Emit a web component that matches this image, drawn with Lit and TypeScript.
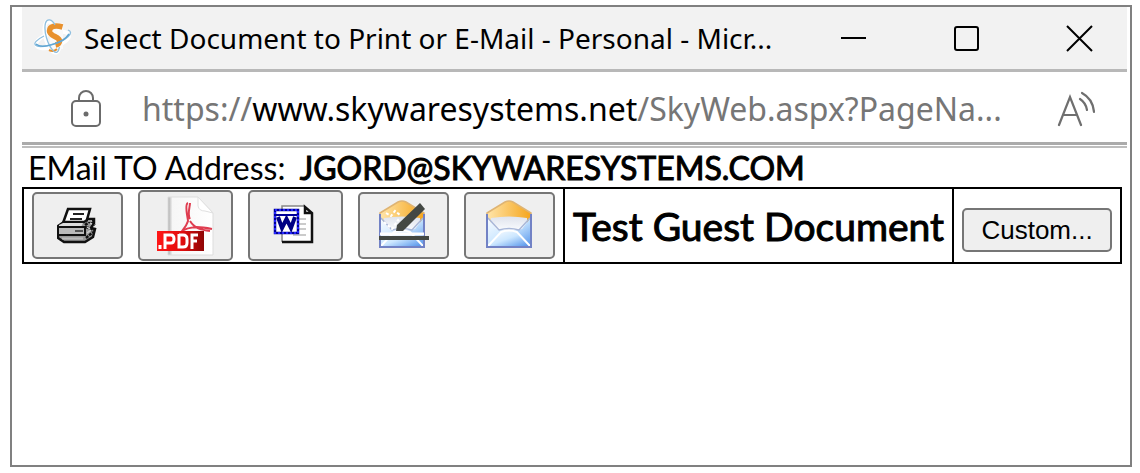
import { LitElement, html, css, svg } from "lit";
import { customElement } from "lit/decorators.js";

const logo = svg`
  <svg width="38" height="38" viewBox="0 0 38 38" fill="none" aria-hidden="true">
    <g stroke="#fff" stroke-width="4" stroke-linecap="round">
      <ellipse cx="18.5" cy="21" rx="17" ry="7" transform="rotate(-17 18.5 21)"/>
      <ellipse cx="18" cy="18" rx="6.5" ry="16" transform="rotate(-15 18 18)"/>
    </g>
    <path d="M17 4h12v26H15z" fill="#fafafa"/>
    <path d="M28.500 8c-7-2-13-1-13 4 0 5.500 10 5.500 10 10 0 3-2 3.500-4 4" stroke="#e8912d" stroke-width="5.500"/>
    <path d="M15 31c3 1.500 6 1 8-1" stroke="#e8912d" stroke-width="2"/>
    <g stroke="#8fbfdf" stroke-width="1.300">
      <path d="M21 6C18 0 13-1 11.500 4c-2 8 2 22 8 28 3 3 5 1 6-4"/>
      <path d="M10 17C-6 25 1 30 16 26c17-4 25-13 18-15"/>
    </g>
    <path d="M2 25c5 5 27 0 33-10" stroke="#5fa5d2" stroke-width="1.500"/>
  </svg>`;

const lock = svg`
  <svg width="32" height="40" viewBox="0 0 32 40" fill="none" stroke="#6b6b6b" stroke-width="2" aria-hidden="true">
    <rect x="2" y="12" width="28" height="25" rx="4"/>
    <path d="M9 12V9a7 7 0 0 1 14 0v3"/>
    <circle cx="16" cy="25" r="2.500" fill="#6b6b6b" stroke="none"/>
  </svg>`;

const readAloud = svg`
  <svg width="38" height="36" viewBox="0 0 38 36" fill="none" stroke="#6f6f6f" stroke-width="2.200" stroke-linecap="round" aria-hidden="true">
    <path d="M2 34 13 6l11 28M6 24h14M23 8q6 4 7 11M25 2q11 6 12 19"/>
  </svg>`;

const printer = svg`
  <svg width="42" height="38" viewBox="1 0 42 38" fill="none" aria-hidden="true">
    <path d="m12 2h22l-4 14H7z" fill="#fff" stroke="#111" stroke-width="2.500"/>
    <path d="M17 7h11M14 12h12" stroke="#222" stroke-width="2"/>
    <path d="M2 19 8 15h20l5-3h5v4l-3 5 4 1-2 8-8 5H8l-6-4z" fill="#999" stroke="#111" stroke-width="2.500"/>
    <path d="m3 18 4-2h20l-2 4H3z" fill="#ddd"/>
    <path d="M2 20h27v8H2z" fill="#bbb" stroke="#111" stroke-width="2"/>
    <path d="M19 24h8" stroke="#555" stroke-width="2"/>
    <path d="M6 31.500h21" stroke="#bbb" stroke-width="2"/>
    <path d="m29 18 9-6M32 13l7 5M30 20l8 3M30 31l7-6" stroke="#111" stroke-width="2.500" stroke-dasharray="3 1"/>
    <path d="m31 20 3 2M34 16l2 1M31 26l4-3M32 14h4" stroke="#ccc" stroke-width="1.500"/>
  </svg>`;

const pdf = svg`
  <svg width="60" height="60" viewBox="0 0 60 60" fill="none" aria-hidden="true">
    <defs>
      <linearGradient id="page" x2="1"><stop stop-color="#aaa"/><stop offset=".1" stop-color="#f6f6f6"/><stop offset="1" stop-color="#fff"/></linearGradient>
      <linearGradient id="red" x2="1"><stop stop-color="#ff1616"/><stop offset=".55" stop-color="#e00d0d"/><stop offset="1" stop-color="#8e0505"/></linearGradient>
    </defs>
    <path d="M12 1h30l15 16v42H12z" fill="url(#page)" stroke="#ddd" stroke-width="1"/>
    <path d="M42 1v9q1 5 7 5l8 2z" fill="#fff" stroke="#e0e0e0"/>
    <path d="M32 7c-4 1 0 15 0 18-2 7-8 11-8 14M34 23c-3-5 0-12 0-16M25 36c8-7 21-5 31-3M34 25c5 8 12 9 20 10" stroke="#df3d50" stroke-width="2"/>
    <path d="M1 35h47v20H1z" fill="url(#red)"/>
    <g stroke="#fff" stroke-width="3">
      <path d="M4 49v4M9 53V39h6q3 0 3 4t-3 4H9M23 38v13h4q4 0 4-4v-4q0-4-4-4h-4M36 53V39h6M36 45h5"/>
    </g>
  </svg>`;

const word = svg`
  <svg width="46" height="46" viewBox="0 0 46 46" fill="none" aria-hidden="true">
    <path d="M10 3h22l7 7v29H10z" fill="#fff"/>
    <path d="M9 39V3h22" stroke="#888" stroke-width="1.500"/>
    <path d="M9 39h30V10l-7-6v6h7" stroke="#111" stroke-width="2.500"/>
    <path d="M26 16h7M26 21h7M26 26h7M20 32h13" stroke="#bbb" stroke-width="1.500"/>
    <path d="M2 7h23v23H2z" fill="#fff" stroke="#000098" stroke-width="2.500"/>
    <path d="M2 7h23v23H2z" stroke="#2525ff" stroke-width="2" stroke-dasharray="2 2"/>
    <path d="M3 12h21" stroke="#00009a" stroke-width="2"/>
    <path d="m5 14 4 11 4.500-9 4.500 9 4-11" stroke="#000083" stroke-width="4"/>
  </svg>`;

const mailShape = svg`
    <defs>
      <linearGradient id="flap" x2="1"><stop stop-color="#ffe5aa"/><stop offset="1" stop-color="#f5a51c"/></linearGradient>
      <linearGradient id="body" x2="1" y2="1"><stop stop-color="#fff"/><stop offset=".5" stop-color="#cce7ff"/><stop offset="1" stop-color="#4f91ea"/></linearGradient>
      <linearGradient id="sheet" x2="0" y2="1"><stop stop-color="#dfe3ec"/><stop offset="1" stop-color="#fafcff"/></linearGradient>
    </defs>
    <path d="M2 13 20 2q4-2 8 0l18 11v10H2z" fill="url(#flap)" stroke="#dfb473" stroke-width="1.500"/>
    <path d="M6 18q18-3 36 0v13H6z" fill="url(#sheet)"/>
    <path d="M1 16v31h46V16l-10 13-5 1H16l-5-1z" fill="url(#body)"/>
    <path d="m3 46 13-14q8-3 16 0l13 14" fill="url(#body)" stroke="#fff" stroke-width="2"/>
    <path d="m3 18 11 12q10-3 20 0l11-12" stroke="#a9b7d8" stroke-width="1.500"/>
    <path d="M2 14v33h44V14" stroke="#7282c5" stroke-width="2"/>`;

const mail = svg`<svg width="50" height="52" viewBox="0 0 50 52" fill="none" aria-hidden="true">${mailShape}</svg>`;

const signMail = svg`
  <svg width="52" height="52" viewBox="0 0 52 52" fill="none" aria-hidden="true">
    ${mailShape}
    <path d="m6 22 8 7 6-9 6 10M8 13l5 3 4-5 5 4" stroke="#fff" stroke-width="2" stroke-dasharray="3 2"/>
    <path d="M2 34h44" stroke="#fff" stroke-width="3"/>
    <path d="M1 38h50" stroke="#434843" stroke-width="4"/>
    <path d="m18 31 1-6L42 3l5 6-22 22z" fill="#444844"/>
  </svg>`;

@customElement("app-root")
export class AppRoot extends LitElement {
  static styles = css`
    :host {
      display: block;
      box-sizing: border-box;
      height: 100vh;
      padding: 5px 8px 6px 10px;
      background: #fff;
      color: #000;
      font-family: Lato, sans-serif;
    }
    * { box-sizing: border-box; }
    .frame {
      height: 100%;
      border: 2px solid #808080;
      padding: 0 3px 0 10px;
    }
    .titlebar {
      display: flex;
      align-items: center;
      height: 65px;
      padding: 0 34px 0 12px;
      background: #f2f2f2;
      border-bottom: 3px solid #b8b8b8;
      font-family: "Noto Sans", sans-serif;
    }
    .title {
      flex: 1;
      margin: 0 0 0 12px;
      font-size: 28px;
      font-weight: 400;
      line-height: 40px;
      white-space: nowrap;
    }
    .window-controls { display: flex; gap: 86px; }
    .plain {
      display: flex;
      padding: 0;
      border: 0;
      background: none;
      color: inherit;
    }
    .address {
      display: flex;
      align-items: center;
      height: 73px;
      padding: 3px 32px 0 48px;
      border-bottom: 3px solid #ababab;
      font-family: "Noto Sans", sans-serif;
    }
    .url {
      flex: 1;
      margin-left: 40px;
      font-size: 32px;
      line-height: 44px;
      color: #767676;
      text-decoration: none;
      white-space: nowrap;
    }
    .host { color: #000; }
    .page {
      margin-top: 1px;
      border-top: 2px solid #bdbdbd;
    }
    .recipient {
      margin: 0;
      padding-left: 6px;
      font-size: 32px;
      line-height: 39px;
      white-space: nowrap;
    }
    .recipient strong {
      margin-left: 6px;
      font-weight: 400;
      -webkit-text-stroke: 1px #000;
    }
    .documents {
      width: calc(100% - 7px);
      border-collapse: collapse;
    }
    .documents td, .documents th {
      height: 75px;
      padding: 0 8px;
      border: 2px solid #000;
      vertical-align: middle;
    }
    .actions { display: flex; align-items: center; gap: 15px; }
    .button {
      display: flex;
      align-items: center;
      justify-content: center;
      border: 2px solid #767676;
      border-radius: 5px;
      background: #efefef;
      color: #000;
    }
    .icon { width: 91px; height: 67px; padding: 0; }
    .large { width: 95px; height: 71px; }
    .documents .name {
      font-size: 39px;
      font-weight: 400;
      line-height: 48px;
      white-space: nowrap;
      -webkit-text-stroke: 1px #000;
    }
    .custom {
      width: 150px;
      height: 44px;
      margin-top: 8px;
      padding: 0;
      font: 26px/30px "Liberation Sans", Arial, sans-serif;
    }
  `;

  render() {
    return html`
      <main class="frame">
        <header class="titlebar">
          ${logo}
          <h1 class="title">Select Document to Print or E-Mail - Personal - Micr...</h1>
          <div class="window-controls">
            <button class="plain" aria-label="Minimize">
              <svg width="27" height="27" viewBox="0 0 27 27"><path d="M1 13h25" stroke="#000" stroke-width="2"/></svg>
            </button>
            <button class="plain" aria-label="Maximize">
              <svg width="27" height="27" viewBox="0 0 27 27"><rect x="2" y="2" width="23" height="23" rx="2" fill="none" stroke="#000" stroke-width="2"/></svg>
            </button>
            <button class="plain" aria-label="Close">
              <svg width="27" height="27" viewBox="0 0 27 27"><path d="m1 1 25 25M26 1 1 26" stroke="#000" stroke-width="2"/></svg>
            </button>
          </div>
        </header>
        <nav class="address" aria-label="Address">
          ${lock}
          <a class="url" href="#">https://<span class="host">www.skywaresystems.net</span>/SkyWeb.aspx?PageNa...</a>
          <button class="plain" aria-label="Read aloud">${readAloud}</button>
        </nav>
        <section class="page">
          <p class="recipient">EMail TO Address: <strong>JGORD@SKYWARESYSTEMS.COM</strong></p>
          <table class="documents">
            <tbody>
              <tr>
                <td>
                  <div class="actions">
                    <button class="button icon" aria-label="Print">${printer}</button>
                    <button class="button icon large" aria-label="PDF">${pdf}</button>
                    <button class="button icon large" aria-label="Word">${word}</button>
                    <button class="button icon" aria-label="Sign and e-mail">${signMail}</button>
                    <button class="button icon" aria-label="E-mail">${mail}</button>
                  </div>
                </td>
                <th class="name" scope="row">Test Guest Document</th>
                <td><button class="button custom">Custom...</button></td>
              </tr>
            </tbody>
          </table>
        </section>
      </main>
    `;
  }
}
